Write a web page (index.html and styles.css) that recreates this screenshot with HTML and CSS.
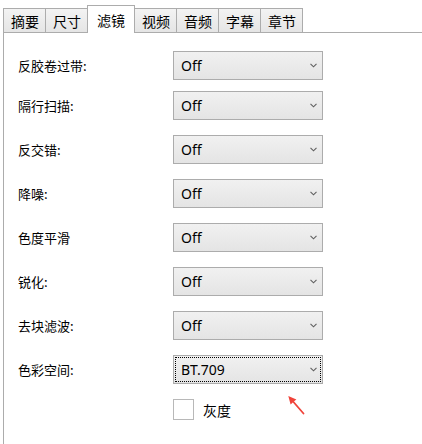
FILE: index.html
```html
<!DOCTYPE html>
<html lang="zh-CN">
<head>
<meta charset="utf-8">
<title>滤镜</title>
<link rel="stylesheet" href="styles.css">
</head>
<body>
<div class="window">
  <div class="tabs">
    <div class="tab">摘要</div>
    <div class="tab">尺寸</div>
    <div class="tab active">滤镜</div>
    <div class="tab">视频</div>
    <div class="tab">音频</div>
    <div class="tab">字幕</div>
    <div class="tab last">章节</div>
  </div>
  <div class="panel">
    <div class="row tight"><span class="label">反胶卷过带:</span><div class="select"><span>Off</span><svg class="chev" width="7" height="5" viewBox="0 0 7 5"><path d="M0.5 0.8 L3.5 3.8 L6.5 0.8" fill="none" stroke="#606060" stroke-width="1.1"/></svg></div></div>
    <div class="row"><span class="label">隔行扫描:</span><div class="select"><span>Off</span><svg class="chev" width="7" height="5" viewBox="0 0 7 5"><path d="M0.5 0.8 L3.5 3.8 L6.5 0.8" fill="none" stroke="#606060" stroke-width="1.1"/></svg></div></div>
    <div class="row"><span class="label">反交错:</span><div class="select"><span>Off</span><svg class="chev" width="7" height="5" viewBox="0 0 7 5"><path d="M0.5 0.8 L3.5 3.8 L6.5 0.8" fill="none" stroke="#606060" stroke-width="1.1"/></svg></div></div>
    <div class="row"><span class="label">降噪:</span><div class="select"><span>Off</span><svg class="chev" width="7" height="5" viewBox="0 0 7 5"><path d="M0.5 0.8 L3.5 3.8 L6.5 0.8" fill="none" stroke="#606060" stroke-width="1.1"/></svg></div></div>
    <div class="row"><span class="label">色度平滑</span><div class="select"><span>Off</span><svg class="chev" width="7" height="5" viewBox="0 0 7 5"><path d="M0.5 0.8 L3.5 3.8 L6.5 0.8" fill="none" stroke="#606060" stroke-width="1.1"/></svg></div></div>
    <div class="row"><span class="label">锐化:</span><div class="select"><span>Off</span><svg class="chev" width="7" height="5" viewBox="0 0 7 5"><path d="M0.5 0.8 L3.5 3.8 L6.5 0.8" fill="none" stroke="#606060" stroke-width="1.1"/></svg></div></div>
    <div class="row"><span class="label">去块滤波:</span><div class="select"><span>Off</span><svg class="chev" width="7" height="5" viewBox="0 0 7 5"><path d="M0.5 0.8 L3.5 3.8 L6.5 0.8" fill="none" stroke="#606060" stroke-width="1.1"/></svg></div></div>
    <div class="row"><span class="label">色彩空间:</span><div class="select focused"><span>BT.709</span><svg class="chev" width="7" height="5" viewBox="0 0 7 5"><path d="M0.5 0.8 L3.5 3.8 L6.5 0.8" fill="none" stroke="#606060" stroke-width="1.1"/></svg></div></div>
    <div class="check-row"><span class="box"></span><span class="check-label">灰度</span></div>
    <svg class="arrow" width="24" height="26" viewBox="0 0 24 26">
      <line x1="9.5" y1="11" x2="19.5" y2="22.5" stroke="#f0433a" stroke-width="1.8" stroke-linecap="round"/>
      <path d="M4.3 5 L12.4 8.6 L9.8 10.6 L6.6 13.6 Z" fill="#f0433a"/>
    </svg>
  </div>
</div>
</body>
</html>
```

FILE: styles.css
```css
html, body {
  margin: 0;
  padding: 0;
  background: #ffffff;
}

body {
  font-family: "Noto Sans CJK SC", "Noto Sans", sans-serif;
  color: #000000;
  overflow: hidden;
}

.window {
  margin-left: 3px;
  height: 444px;
  display: flex;
  flex-direction: column;
}

.tabs {
  display: flex;
  align-items: flex-end;
  height: 27px;
  padding-top: 5px;
  border-bottom: 1px solid #acacac;
}

.tab {
  border: 1px solid #acacac;
  border-right: 0;
  border-bottom: 0;
  padding: 3px 6px 1px 7px;
  line-height: 19px;
  font-size: 14px;
  background: linear-gradient(#f3f3f3, #e5e5e5);
  white-space: nowrap;
}

.tab.active {
  background: #ffffff;
  border-right: 1px solid #acacac;
  padding: 5px 9px 3px 9px;
  margin-bottom: -1px;
  position: relative;
}

.tab.active + .tab {
  border-left: 0;
}

.tab.last {
  border-right: 1px solid #acacac;
}

.panel {
  flex: 1;
  border-left: 1px solid #acacac;
  padding: 18px 0 0 14px;
  position: relative;
}

.row {
  display: flex;
  align-items: center;
  height: 29px;
  margin-bottom: 15px;
}

.row.tight {
  margin-bottom: 11px;
}

.label {
  width: 155px;
  font-size: 13px;
  line-height: 18px;
}

.select {
  width: 150px;
  height: 29px;
  box-sizing: border-box;
  border: 1px solid #acacac;
  background: linear-gradient(#f1f1f1, #e4e4e4);
  display: flex;
  align-items: center;
  justify-content: space-between;
  padding: 0 5px 0 7px;
  font-family: "Noto Sans", "Open Sans", sans-serif;
  font-size: 14px;
}

.select.focused {
  outline: 1px dotted #000000;
  outline-offset: -3px;
}

.chev {
  display: block;
}

.check-row {
  display: flex;
  align-items: center;
  margin-top: 12px;
  padding-left: 155px;
}

.box {
  width: 19px;
  height: 19px;
  border: 1px solid #b8b8b8;
  background: #ffffff;
}

.check-label {
  margin-left: 9px;
  font-size: 14px;
}

.arrow {
  position: absolute;
  left: 280px;
  top: 358px;
}
```
